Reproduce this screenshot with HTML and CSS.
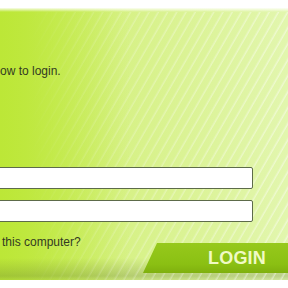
FILE: index.html
```html
<!DOCTYPE html>
<html>
<head>
<meta charset="utf-8">
<link rel="stylesheet" href="styles.css">
</head>
<body>
<div class="page">
  <div class="panel">
    <p class="intro">ow to login.</p>
    <div class="fields">
      <input class="field" type="text">
      <input class="field" type="password">
    </div>
    <div class="actions">
      <span class="remember">this computer?</span>
      <button class="login">LOGIN</button>
    </div>
  </div>
</div>
</body>
</html>
```
FILE: styles.css
```css
html, body {
  margin: 0;
  padding: 0;
  background: #ffffff;
}
.page {
  width: 288px;
  height: 288px;
  overflow: hidden;
  padding-top: 8px;
  box-sizing: border-box;
  font-family: "Liberation Sans", Arial, sans-serif;
}
.panel {
  position: relative;
  height: 272px;
  box-sizing: border-box;
  padding-top: 56px;
  display: flex;
  flex-direction: column;
  background:
    linear-gradient(to bottom, rgba(255,255,255,0.9) 0px, rgba(255,255,255,0) 4px),
    linear-gradient(to bottom, rgba(0,0,0,0) 0px, rgba(0,0,0,0) 250px, rgba(90,110,50,0.28) 268px, rgba(90,110,50,0.12) 272px),
    linear-gradient(90deg, rgba(188,231,55,1) 0%, rgba(188,231,55,0) 45%),
    linear-gradient(90deg, #c6ec4f 0%, #d6f184 40%, #e2f6ae 100%);
}
.panel::before {
  content: "";
  position: absolute;
  left: 0;
  top: 4px;
  right: 0;
  bottom: 0;
  background: repeating-linear-gradient(-60deg, rgba(255,255,255,0) 0px, rgba(255,255,255,0) 5px, rgba(255,255,255,0.45) 6px, rgba(255,255,255,0) 8px);
  -webkit-mask-image: linear-gradient(90deg, rgba(0,0,0,0) 10%, rgba(0,0,0,0.6) 50%, #000 100%);
  mask-image: linear-gradient(90deg, rgba(0,0,0,0) 10%, rgba(0,0,0,0.6) 50%, #000 100%);
  pointer-events: none;
}
.intro, .fields, .actions {
  position: relative;
}
.intro {
  margin: 0;
  font-size: 12px;
  line-height: 14px;
  color: #333a22;
}
.fields {
  margin-top: 89px;
  margin-left: -10px;
  display: flex;
  flex-direction: column;
  gap: 11px;
  width: 263px;
}
.field {
  height: 22px;
  box-sizing: border-box;
  margin: 0;
  border: 1px solid #5d6b4a;
  border-radius: 2px;
  background: #ffffff;
  padding: 0 4px;
}
.actions {
  margin-top: 13px;
  height: 38px;
  display: flex;
  justify-content: space-between;
  align-items: flex-end;
}
.remember {
  align-self: flex-start;
  font-size: 12px;
  line-height: 14px;
  color: #333a22;
  padding-left: 2px;
}
.login {
  width: 148px;
  height: 30px;
  margin-right: -3px;
  border: 0;
  padding: 0 0 0 40px;
  clip-path: polygon(14px 0, 100% 0, 100% 100%, 0 100%);
  background: linear-gradient(to bottom, #96c91c 0%, #8bc013 70%, #7fb00e 100%);
  color: #f0fac4;
  font-family: "Liberation Sans", Arial, sans-serif;
  font-weight: bold;
  font-size: 18px;
  letter-spacing: 0.2px;
  text-align: center;
}
```
